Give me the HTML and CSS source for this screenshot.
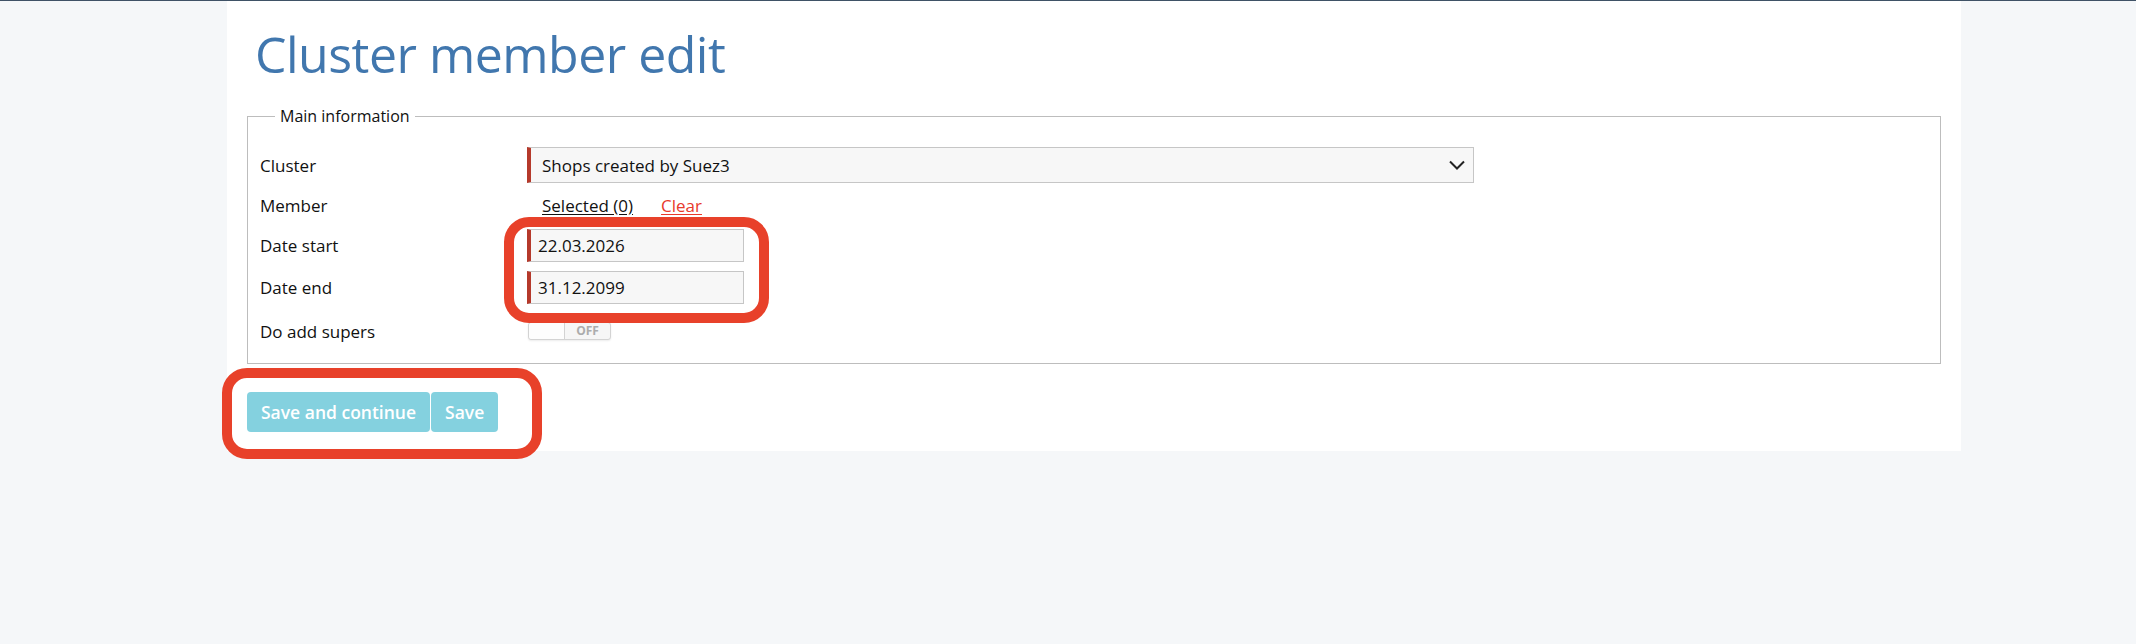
FILE: index.html
```html
<!DOCTYPE html>
<html lang="en">
<head>
  <meta charset="UTF-8">
  <title>Cluster member edit</title>
  <link rel="stylesheet" href="styles.css">
</head>
<body>
  <main class="page">
    <h1 class="page-title">Cluster member edit</h1>

    <form class="edit-form" onsubmit="return false">
      <fieldset class="panel">
        <legend>Main information</legend>

        <div class="form-row">
          <label class="form-label">Cluster</label>
          <div class="select-box">
            <span>Shops created by Suez3</span>
            <svg class="chevron" width="16" height="10" viewBox="0 0 16 10">
              <polyline points="1,1.5 8,8.5 15,1.5" fill="none" stroke="#222" stroke-width="2"/>
            </svg>
          </div>
        </div>

        <div class="form-row">
          <label class="form-label">Member</label>
          <div class="member-links">
            <a href="#" class="link-selected">Selected (0)</a>
            <a href="#" class="link-clear">Clear</a>
          </div>
        </div>

        <div class="form-row">
          <label class="form-label">Date start</label>
          <input class="text-input" type="text" value="22.03.2026">
        </div>
        <div class="form-row form-row--tall">
          <label class="form-label">Date end</label>
          <input class="text-input" type="text" value="31.12.2099">
        </div>

        <div class="form-row form-row--tall">
          <label class="form-label">Do add supers</label>
          <div class="toggle">
            <span class="toggle-knob"></span>
            <span class="toggle-label">OFF</span>
          </div>
        </div>
      </fieldset>

      <div class="actions">
        <button class="btn">Save and continue</button><button class="btn">Save</button>
      </div>
    </form>
  </main>

  <!-- review markers drawn on top of the screenshot -->
  <span class="highlight highlight--dates"></span>
  <span class="highlight highlight--actions"></span>
</body>
</html>
```

FILE: styles.css
```css
:root {
  --page-bg: #f5f7f9;
  --title: #4177ae;
  --border: #bdbdbd;
  --input-bg: #f7f7f7;
  --input-border: #c6c6c6;
  --required: #b5392b;
  --link-red: #e8392b;
  --button: #84d1df;
  --marker: #e8412a;
  --text: #111;
}

* {
  box-sizing: border-box;
}

body {
  position: relative;
  min-height: 100vh;
  margin: 0;
  background-color: var(--page-bg);
  border-top: 1px solid #3f5266;
  font-family: "Open Sans", "Liberation Sans", sans-serif;
  color: var(--text);
}

.page {
  width: 1734px;
  margin-left: 227px;
  padding: 23px 20px 19px;
  background-color: #fff;
}

.page-title {
  margin: 0 0 21px 8px;
  font-size: 50px;
  line-height: 60px;
  font-weight: 400;
  letter-spacing: -0.5px;
  color: var(--title);
}

.panel {
  margin: 0 0 28px;
  padding: 18px 12px 10px;
  border: 1px solid var(--border);
}

.panel legend {
  margin-left: 15px;
  padding: 0 5px;
  font-size: 16px;
  line-height: 22px;
}

.form-row {
  display: flex;
  align-items: center;
  height: 40px;
}

.form-row--tall {
  height: 44px;
}

.form-label {
  width: 267px;
  flex-shrink: 0;
  font-size: 17px;
}

.select-box {
  display: flex;
  align-items: center;
  justify-content: space-between;
  width: 947px;
  height: 36px;
  padding: 0 8px 0 11px;
  background-color: var(--input-bg);
  border: 1px solid var(--input-border);
  border-left: 4px solid var(--required);
  font-size: 17px;
}

.chevron {
  display: block;
}

.member-links {
  display: flex;
  gap: 28px;
  padding-left: 15px;
  font-size: 17px;
}

.member-links a {
  text-decoration: underline;
  text-underline-offset: 2px;
}

.link-selected {
  color: var(--text);
}

.link-clear {
  color: var(--link-red);
}

.text-input {
  width: 217px;
  height: 33px;
  padding: 0 0 0 7px;
  background-color: var(--input-bg);
  border: 1px solid var(--input-border);
  border-left: 4px solid var(--required);
  font-family: inherit;
  font-size: 17px;
  color: var(--text);
}

.toggle {
  display: flex;
  width: 83px;
  height: 18px;
  margin-left: 1px;
  border: 1px solid #d3d3d3;
  border-radius: 3px;
  box-shadow: 0 1px 2px rgba(0, 0, 0, 0.08);
  background-color: #f6f6f6;
}

.toggle-knob {
  width: 36px;
  background-color: #fdfdfd;
  border-right: 1px solid #d3d3d3;
  border-radius: 3px 0 0 3px;
}

.toggle-label {
  flex: 1;
  text-align: center;
  font-size: 12px;
  line-height: 16px;
  font-weight: 700;
  color: #acacac;
}

.actions {
  display: flex;
  gap: 1px;
}

.btn {
  height: 40px;
  padding: 0 14px;
  border: none;
  border-radius: 4px;
  background-color: var(--button);
  color: #fff;
  font-family: inherit;
  font-size: 17.5px;
  font-weight: 600;
  cursor: pointer;
}

/* red review markers */
.highlight {
  position: absolute;
  z-index: 2;
  border: 10px solid var(--marker);
  border-radius: 25px;
  pointer-events: none;
}

.highlight--dates {
  left: 504px;
  top: 216px;
  width: 265px;
  height: 106px;
}

.highlight--actions {
  left: 222px;
  top: 367px;
  width: 320px;
  height: 91px;
}
```
